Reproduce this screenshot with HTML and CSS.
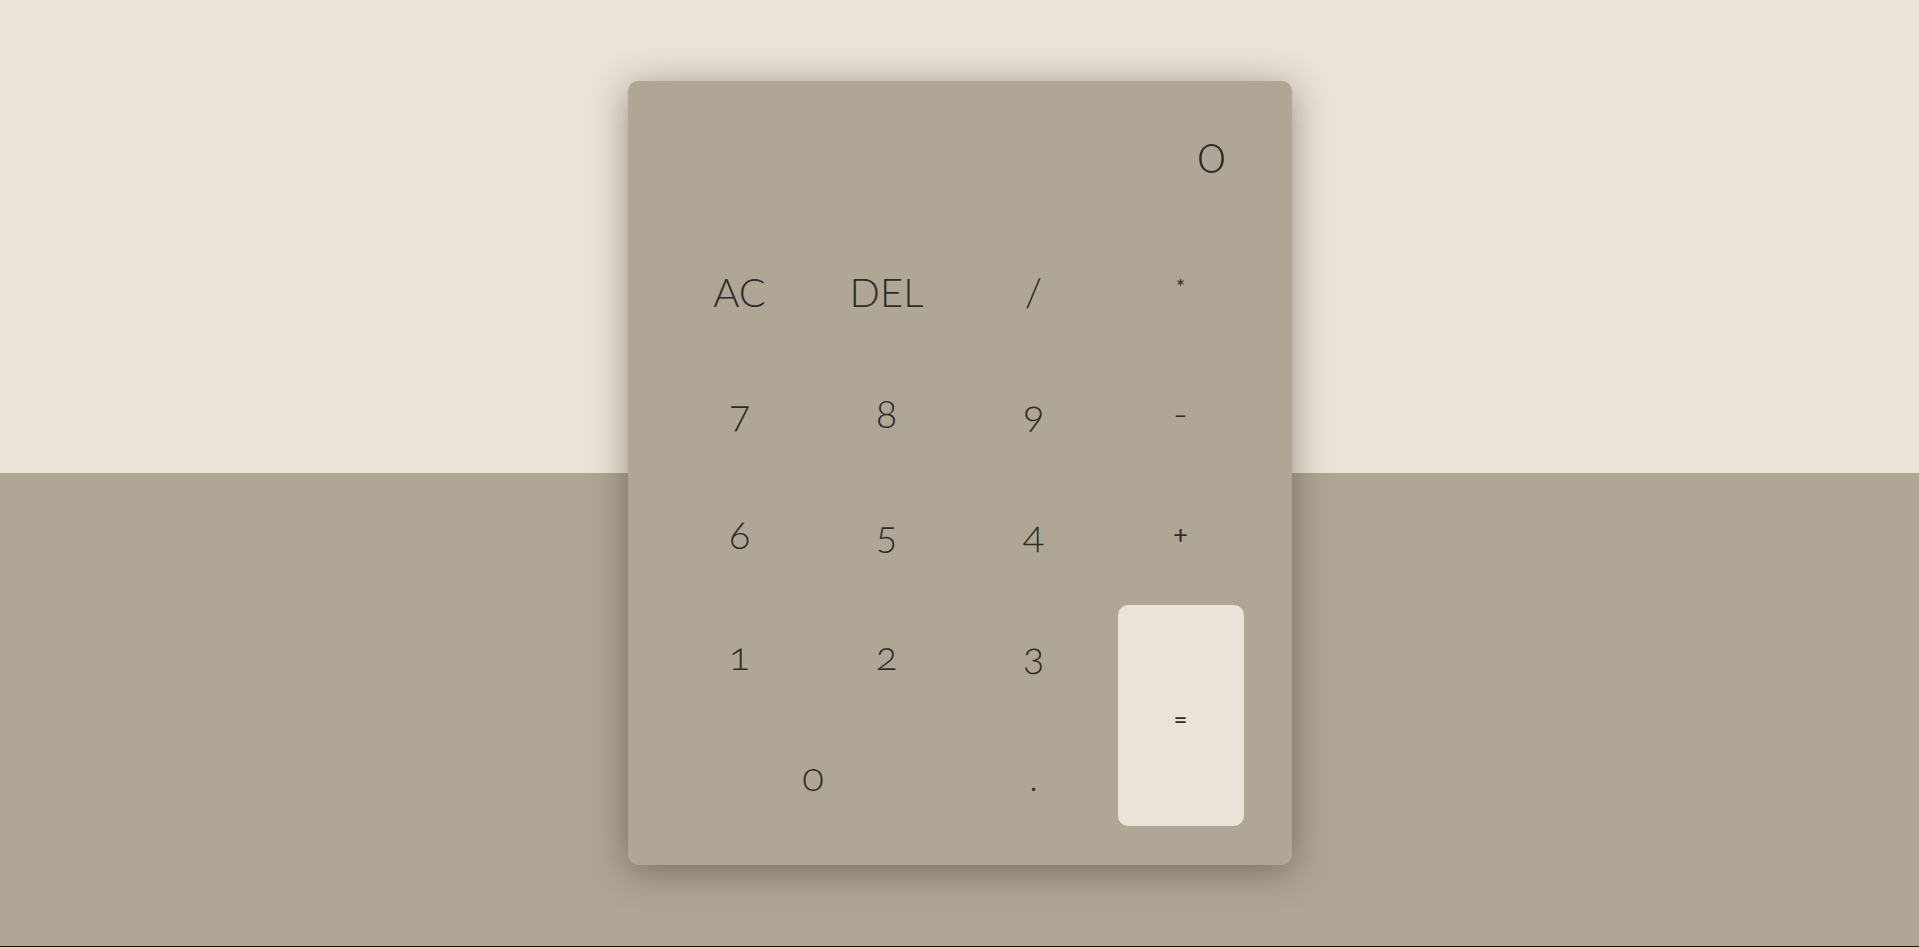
FILE: index.html
```html
<!DOCTYPE html>
<html lang="en">
<head>
<meta charset="utf-8">
<title>Calculator</title>
<link rel="stylesheet" href="styles.css">
</head>
<body>
<main class="page">
  <div class="calculator">
    <div class="display">0</div>
    <div class="keys">
      <button class="key">AC</button>
      <button class="key">DEL</button>
      <button class="key">/</button>
      <button class="key"><span class="op op-mul">*</span></button>
      <button class="key">7</button>
      <button class="key">8</button>
      <button class="key">9</button>
      <button class="key"><span class="op op-sub">-</span></button>
      <button class="key">6</button>
      <button class="key">5</button>
      <button class="key">4</button>
      <button class="key"><span class="op op-add">+</span></button>
      <button class="key">1</button>
      <button class="key">2</button>
      <button class="key">3</button>
      <button class="key key-equals"><span class="op op-eq">=</span></button>
      <button class="key key-zero">0</button>
      <button class="key"><span class="op op-dot">.</span></button>
    </div>
  </div>
</main>
</body>
</html>
```

FILE: styles.css
```css
* {
  box-sizing: border-box;
}

html {
  background: #111;
}

body {
  margin: 0;
}

.page {
  height: 946px;
  background: linear-gradient(to bottom, #ebe3d7 0, #ebe3d7 473px, #afa695 473px, #afa695 100%);
  display: flex;
  align-items: center;
  justify-content: center;
  font-family: Lato, "Open Sans", sans-serif;
  font-weight: 300;
  color: #2f2c28;
  font-variant-numeric: oldstyle-nums;
}

.calculator {
  width: 664px;
  height: 784px;
  background: #afa695;
  border-radius: 10px;
  padding: 0 48px 40px 49px;
  box-shadow: 0 6px 38px rgba(50, 40, 25, 0.45);
}

.display {
  height: 161px;
  padding: 41px 18px 0 0;
  text-align: right;
  font-size: 52px;
  line-height: normal;
}

.keys {
  display: grid;
  grid-template-columns: repeat(4, 126px);
  grid-auto-rows: 100px;
  gap: 21px;
}

.key {
  margin: 0;
  padding: 0;
  border: 0;
  background: transparent;
  font: inherit;
  font-size: 40px;
  line-height: normal;
  color: inherit;
  font-variant-numeric: oldstyle-nums;
  text-align: center;
  cursor: pointer;
}

.key-zero {
  grid-column: span 2;
}

.key-equals {
  grid-column: 4;
  grid-row: 4 / span 2;
  background: #ebe3d7;
  border-radius: 10px;
}

.op {
  display: inline-block;
  font-weight: 400;
}

.op-mul {
  font-size: 22px;
  vertical-align: 12px;
}

.op-sub {
  font-size: 40px;
  font-weight: 300;
}

.op-add {
  font-size: 27px;
  vertical-align: 6px;
}

.op-eq {
  font-size: 25px;
  vertical-align: 4px;
}

.op-dot {
  font-size: 26px;
}
```
